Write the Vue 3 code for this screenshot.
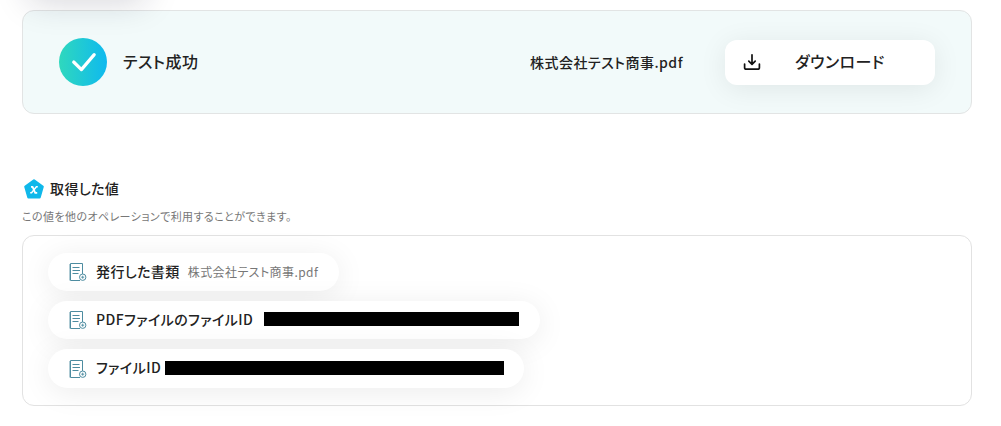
<template>
    <div class="result-page">
        <div class="upper-button"></div>
        <section class="test-result">
            <svg class="check-icon" width="48" height="48" viewBox="0 0 48 48">
                <defs>
                    <linearGradient id="check-bg" x1="0" y1="0" x2="1" y2="0">
                        <stop offset="0" stop-color="#2fd8bd" />
                        <stop offset="1" stop-color="#0fb9ef" />
                    </linearGradient>
                </defs>
                <circle cx="24" cy="24" r="24" fill="url(#check-bg)" />
                <path d="M14.7 24L22.4 31.6L35.2 16.6" fill="none" stroke="#fff" stroke-width="3.2" stroke-linecap="round" stroke-linejoin="round" />
            </svg>
            <span class="result-title">テスト成功</span>
            <span class="result-file">株式会社テスト商事.pdf</span>
            <button class="download" type="button">
                <svg width="18" height="18" viewBox="0 0 18 18" fill="none" stroke="#111" stroke-width="1.7" stroke-linecap="round" stroke-linejoin="round">
                    <path d="M9 1.8V11.2M5.8 8.2L9 11.4L12.2 8.2" />
                    <path d="M1.6 11V14.4Q1.6 16.2 3.4 16.2H14.6Q16.4 16.2 16.4 14.4V11" />
                </svg>
                <span class="download-label">ダウンロード</span>
            </button>
        </section>

        <div class="values-heading">
            <svg width="22" height="22" viewBox="0 0 22 22">
                <path d="M11 2.4L19.6 8.6L16.6 19.2H5.4L2.4 8.6Z" fill="#10b8ea" stroke="#10b8ea" stroke-width="2.4" stroke-linejoin="round" />
                <path d="M8 8.8H9.6L12.2 14.8H14.2" fill="none" stroke="#fff" stroke-width="1.8" stroke-linejoin="round" />
                <path d="M14.8 8.8H13.4L8.6 14.8H7.2" fill="none" stroke="#fff" stroke-width="1.4" stroke-linejoin="round" />
            </svg>
            <h2>取得した値</h2>
        </div>
        <p class="values-note">この値を他のオペレーションで利用することができます。</p>

        <section class="values">
            <div
                class="value-item"
                v-for="item of items"
                :key="item.label"
                :class="item.name"
            >
                <svg class="doc-icon" width="20" height="20" viewBox="0 0 20 20" fill="none" stroke="#4d8ca0">
                    <path d="M12 18.5H2.5V1.5H14.5V12" stroke-width="1" />
                    <path d="M1.5 2V18.5" stroke-width="1" opacity=".45" />
                    <path d="M4.5 5.5H11.5M4.5 8.5H12M4.5 11.5H10.5" stroke-width="1" />
                    <circle cx="14.7" cy="15.2" r="3.2" stroke-width="1" />
                    <path d="M14.7 13.7V16.7M13.2 15.2H16.2" stroke-width=".9" />
                </svg>
                <span class="value-label">{{ item.label }}</span>
                <span v-if="item.text" class="value-text">{{ item.text }}</span>
                <span v-else class="value-mask"></span>
            </div>
        </section>
    </div>
</template>


<script setup>
const items = [
    { name: 'document', label: '発行した書類', text: '株式会社テスト商事.pdf' },
    { name: 'pdf-id', label: 'PDFファイルのファイルID' },
    { name: 'file-id', label: 'ファイルID' },
];
</script>

<style>
body {
    background-color: #fff;
}
</style>

<style scoped>
.result-page {
    position: relative;
    box-sizing: border-box;
    width: 1001px;
    height: 426px;
    padding: 10px 29px 0 22px;
    overflow: hidden;
    color: #222;
    font-family: "Noto Sans CJK JP", sans-serif;
    font-feature-settings: "palt";
    font-weight: 500;
    letter-spacing: .42px;
}

/* 上にあるボタンの影だけが見える */
.upper-button {
    position: absolute;
    z-index: 1;
    top: -40px;
    left: 28px;
    width: 118px;
    height: 38px;
    border-radius: 10px;
    box-shadow: 0 4px 34px rgba(20, 20, 50, .18);
}

.test-result {
    display: flex;
    align-items: center;
    box-sizing: border-box;
    height: 104px;
    padding: 0 36px;
    border: 1px solid #e2e4e4;
    border-radius: 12px;
    background-color: #f2fafa;
}

.check-icon {
    flex: none;
}

.result-title {
    margin-left: 16px;
    padding-bottom: 2px;
    font-size: 16px;
    line-height: 24px;
    white-space: nowrap;
}

.result-file {
    margin-left: auto;
    font-size: 14px;
    line-height: 24px;
    letter-spacing: .48px;
    white-space: nowrap;
}

.download {
    display: flex;
    align-items: center;
    box-sizing: border-box;
    width: 210px;
    height: 45px;
    margin-left: 42px;
    padding: 0 18px;
    border: 0;
    border-radius: 12px;
    background-color: #fff;
    box-shadow: 0 4px 28px rgba(0, 0, 0, .08);
    color: inherit;
    font: inherit;
    font-feature-settings: inherit;
    letter-spacing: inherit;
}

.download-label {
    margin-left: 34px;
    padding-bottom: 2px;
    font-size: 16px;
    line-height: 24px;
    white-space: nowrap;
}

.values-heading {
    display: flex;
    align-items: center;
    height: 24px;
    margin-top: 63px;
    padding-left: 1px;
}

.values-heading h2 {
    margin: 0 0 0 5px;
    padding-bottom: 2px;
    font-size: 14px;
    font-weight: 500;
    line-height: 24px;
}

.values-note {
    height: 20px;
    margin: 5px 0 9px;
    color: #777;
    font-size: 11px;
    font-weight: 400;
    line-height: 20px;
}

.values {
    display: flex;
    flex-direction: column;
    align-items: flex-start;
    gap: 10px;
    box-sizing: border-box;
    height: 171px;
    padding: 17px 25px;
    border: 1px solid #e2e2e2;
    border-radius: 12px;
}

.value-item {
    display: flex;
    align-items: center;
    box-sizing: border-box;
    height: 38px;
    padding-left: 20px;
    border-radius: 20px;
    background-color: #fff;
    box-shadow: 0 4px 30px rgba(0, 0, 0, .08);
    white-space: nowrap;
}

.document {
    width: 291px;
}

.pdf-id {
    width: 492px;
}

.file-id {
    width: 476px;
    height: 39px;
}

.doc-icon {
    flex: none;
}

.value-label {
    margin-left: 8px;
    padding-bottom: 2px;
    font-size: 14px;
}

.file-id .value-label {
    padding-bottom: 3px;
}

.value-text {
    margin-left: 8px;
    padding-bottom: 2px;
    color: #777;
    font-size: 12px;
    font-weight: 400;
}

.value-mask {
    height: 14px;
    margin-right: 21px;
    margin-left: auto;
    background-color: #000;
}

.pdf-id .value-mask {
    width: 255px;
    margin-bottom: 2px;
}

.file-id .value-mask {
    width: 339px;
    margin-right: 20px;
    margin-bottom: 1px;
}
</style>
